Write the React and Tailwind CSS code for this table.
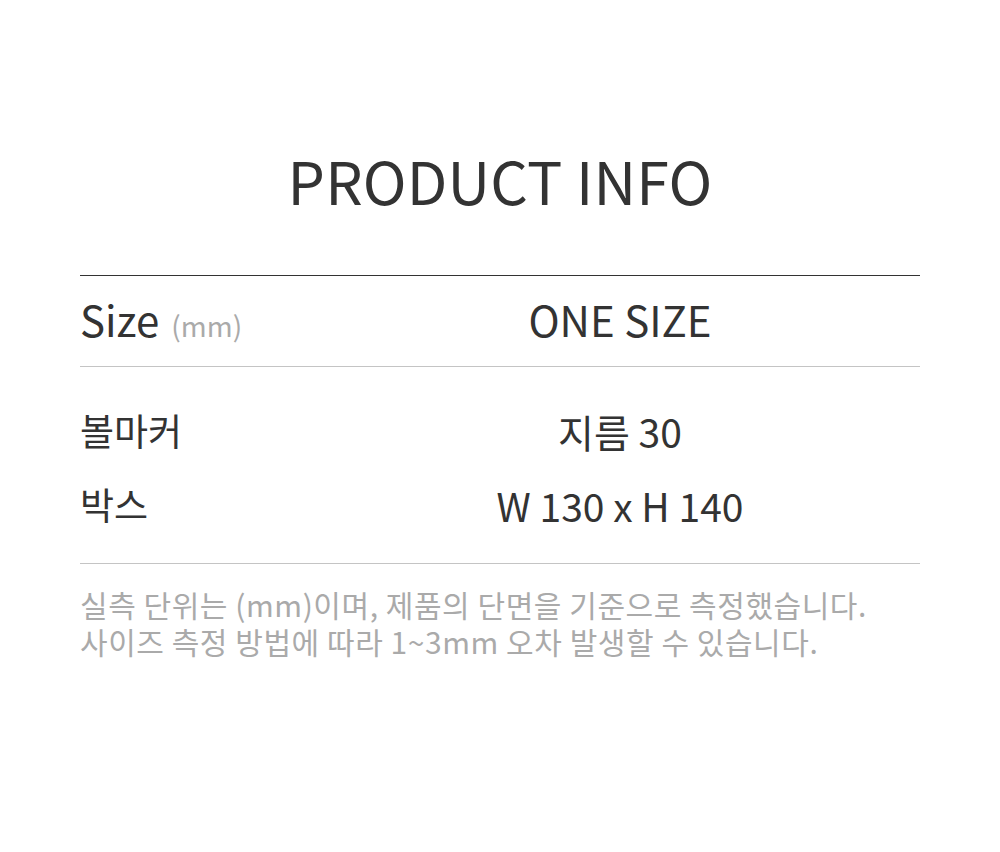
export default function App() {
  const rows = [
    { label: '볼마커', value: '지름 30' },
    { label: '박스', value: 'W 130 x H 140' },
  ];

  return (
    <div className="w-[1000px] h-[852px] bg-white text-[#333] font-['Noto_Sans_CJK_KR','Noto_Sans',sans-serif]">
      <div className="px-20 pt-[142px]">
        <h1 className="text-center text-[59px] leading-[76px] tracking-[0.2px]">PRODUCT INFO</h1>

        <div className="mt-[57px] border-t border-[#333]">
          <div className="flex items-center h-[91px] border-b border-[#c4c4c4]">
            <div className="w-[240px] flex items-baseline gap-3">
              <span className="text-[42px] -translate-y-[3px]">Size</span>
              <span className="text-[28px] text-[#aaa] -translate-y-[3px]">(mm)</span>
            </div>
            <div className="flex-1 text-center text-[42px] -translate-y-[3px]">ONE SIZE</div>
          </div>

          <div className="pt-[27px] pb-[21px] border-b border-[#c4c4c4]">
            {rows.map((r) => (
              <div key={r.label} className="flex items-center h-[74px]">
                <div className="w-[240px] text-[37px]">{r.label}</div>
                <div className="flex-1 text-center text-[39px]">{r.value}</div>
              </div>
            ))}
          </div>
        </div>

        <div className="mt-[22px] text-[30px] leading-[37px] text-[#aaa] tracking-[0.55px]">
          <p>실측 단위는 (mm)이며, 제품의 단면을 기준으로 측정했습니다.</p>
          <p>사이즈 측정 방법에 따라 1~3mm 오차 발생할 수 있습니다.</p>
        </div>
      </div>
    </div>
  );
}
